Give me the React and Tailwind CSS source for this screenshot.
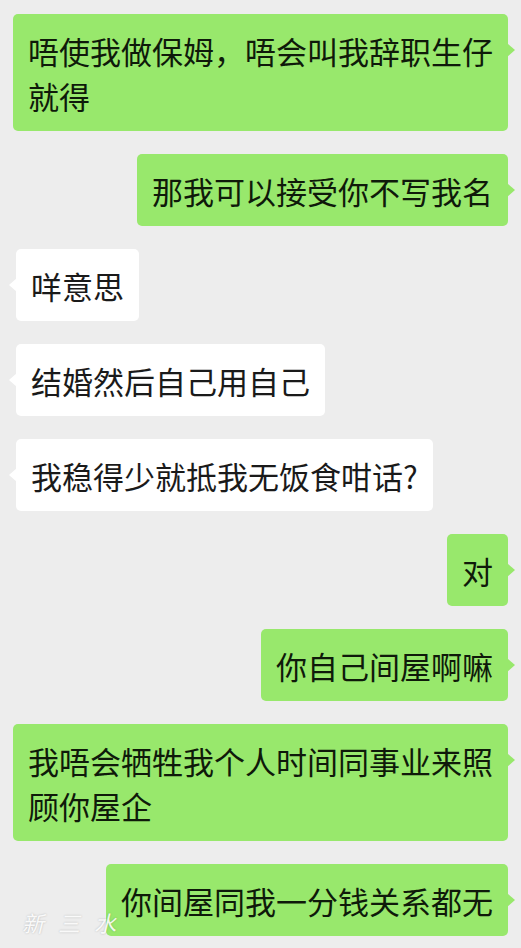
const messages = [
  { me: true, text: "唔使我做保姆，唔会叫我辞职生仔就得" },
  { me: true, text: "那我可以接受你不写我名" },
  { me: false, text: "咩意思" },
  { me: false, text: "结婚然后自己用自己" },
  { me: false, text: "我稳得少就抵我无饭食咁话?" },
  { me: true, text: "对" },
  { me: true, text: "你自己间屋啊嘛" },
  { me: true, text: "我唔会牺牲我个人时间同事业来照顾你屋企" },
  { me: true, text: "你间屋同我一分钱关系都无" },
]

function Bubble({ me, text }) {
  return (
    <div className={me ? "flex justify-end" : "flex justify-start pl-[3px]"}>
      <div
        className={
          "relative max-w-[496px] rounded-[5px] px-[15px] py-[13.5px] text-[31px] leading-[45px] " +
          (me ? "bg-[#98e86c] text-[#0f1a0a]" : "bg-white text-[#1a1a1a]")
        }
      >
        {text}
        {me ? (
          <span className="absolute top-[29px] -right-[7px] w-0 h-0 border-y-[7px] border-y-transparent border-l-[8px] border-l-[#98e86c]" />
        ) : (
          <span className="absolute top-[29px] -left-[7px] w-0 h-0 border-y-[7px] border-y-transparent border-r-[8px] border-r-white" />
        )}
      </div>
    </div>
  )
}

export default function App() {
  return (
    <div
      className="relative w-[521px] h-[948px] overflow-hidden bg-[#ededed]"
      style={{ fontFamily: '"Noto Sans CJK SC", "Noto Sans", sans-serif' }}
    >
      <div className="flex flex-col gap-[23px] pt-[14px] pl-[13px] pr-[13px]">
        {messages.map((m, i) => (
          <Bubble key={i} me={m.me} text={m.text} />
        ))}
      </div>

      {/* watermark */}
      <div
        className="absolute left-[22px] top-[906px] flex gap-[14px] text-[22px] italic text-white/90"
        style={{ fontFamily: '"Noto Sans CJK SC", serif', textShadow: "0 0 2px rgba(0,0,0,0.25)" }}
      >
        <span>新</span>
        <span>三</span>
        <span>水</span>
      </div>
    </div>
  )
}
